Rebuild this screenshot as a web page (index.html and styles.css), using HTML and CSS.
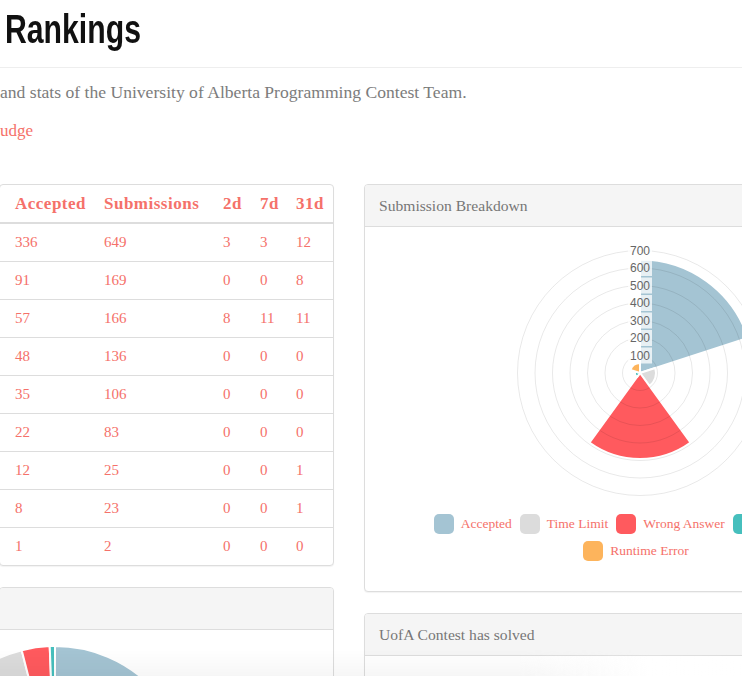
FILE: index.html
```html
<!DOCTYPE html>
<html>
<head>
<meta charset="utf-8">
<title>Rankings</title>
<link rel="stylesheet" href="styles.css">
</head>
<body>
<div class="page-header"><h1>Rankings</h1></div>
<p class="lead">and stats of the University of Alberta Programming Contest Team.</p>
<p class="link"><a href="#">udge</a></p>

<div class="row">
  <div class="col col-left">
    <div class="panel panel-table">
      <table class="ranks">
        <colgroup>
          <col class="c-acc"><col class="c-sub"><col class="c-2d"><col class="c-7d"><col class="c-31d">
        </colgroup>
        <thead>
          <tr><th class="first">Accepted</th><th>Submissions</th><th>2d</th><th>7d</th><th>31d</th></tr>
        </thead>
        <tbody>
          <tr><td class="first">336</td><td>649</td><td>3</td><td>3</td><td>12</td></tr>
          <tr><td class="first">91</td><td>169</td><td>0</td><td>0</td><td>8</td></tr>
          <tr><td class="first">57</td><td>166</td><td>8</td><td>11</td><td>11</td></tr>
          <tr><td class="first">48</td><td>136</td><td>0</td><td>0</td><td>0</td></tr>
          <tr><td class="first">35</td><td>106</td><td>0</td><td>0</td><td>0</td></tr>
          <tr><td class="first">22</td><td>83</td><td>0</td><td>0</td><td>0</td></tr>
          <tr><td class="first">12</td><td>25</td><td>0</td><td>0</td><td>1</td></tr>
          <tr><td class="first">8</td><td>23</td><td>0</td><td>0</td><td>1</td></tr>
          <tr><td class="first">1</td><td>2</td><td>0</td><td>0</td><td>0</td></tr>
        </tbody>
      </table>
    </div>

    <div class="panel">
      <div class="panel-heading">&nbsp;</div>
      <div class="panel-body pie-body">
        <svg class="pie" width="300" height="300" viewBox="-55 -136 300 300">
          <g stroke="#fff" stroke-width="2" stroke-linejoin="round">
            <path fill="#a4c4d3" d="M0 0 L0 -135 A135 135 0 1 1 -126.86 -46.17 Z"/>
            <path fill="#dcdcdc" d="M0 0 L-126.86 -46.17 A135 135 0 0 1 -33.30 -130.83 Z"/>
            <path fill="#ff5a5e" d="M0 0 L-33.30 -130.83 A135 135 0 0 1 -5.30 -134.90 Z"/>
            <path fill="#46bfbd" d="M0 0 L-5.30 -134.90 A135 135 0 0 1 0 -135 Z"/>
          </g>
        </svg>
      </div>
    </div>
  </div>

  <div class="col col-right">
    <div class="panel">
      <div class="panel-heading">Submission Breakdown</div>
      <div class="panel-body chart-body">
        <svg class="polar" width="300" height="250" viewBox="0 0 300 250">
          <g stroke="#fff" stroke-width="2" stroke-linejoin="round">
            <path fill="#a4c4d3" d="M150 125 L150 11.4 A113.6 113.6 0 0 1 258.04 89.9 Z"/>
            <path fill="#dcdcdc" d="M150 125 L165.22 120.06 A16 16 0 0 1 159.40 137.94 Z"/>
            <path fill="#ff5a5e" d="M150 125 L200.55 194.57 A86 86 0 0 1 99.45 194.57 Z"/>
            <path fill="#46bfbd" d="M150 125 L147.06 129.05 A5 5 0 0 1 145.24 123.45 Z"/>
            <path fill="#fdb45c" d="M150 125 L140.49 121.91 A10 10 0 0 1 150 115 Z"/>
          </g>
          <g fill="none" stroke="#000" stroke-opacity="0.09" stroke-width="1">
            <circle cx="150" cy="125" r="17.5"/>
            <circle cx="150" cy="125" r="35"/>
            <circle cx="150" cy="125" r="52.5"/>
            <circle cx="150" cy="125" r="70"/>
            <circle cx="150" cy="125" r="87.5"/>
            <circle cx="150" cy="125" r="105"/>
            <circle cx="150" cy="125" r="122.5"/>
          </g>
          <g class="ticks">
            <rect x="138" y="99.5" width="24" height="16"/>
            <rect x="138" y="82" width="24" height="16"/>
            <rect x="138" y="64.5" width="24" height="16"/>
            <rect x="138" y="47" width="24" height="16"/>
            <rect x="138" y="29.5" width="24" height="16"/>
            <rect x="138" y="12" width="24" height="16"/>
            <rect x="138" y="-5.5" width="24" height="16"/>
          </g>
          <g class="tick-text" text-anchor="middle">
            <text x="150" y="111.8">100</text>
            <text x="150" y="94.3">200</text>
            <text x="150" y="76.8">300</text>
            <text x="150" y="59.3">400</text>
            <text x="150" y="41.8">500</text>
            <text x="150" y="24.3">600</text>
            <text x="150" y="6.8">700</text>
          </g>
        </svg>
        <ul class="legend">
          <li><span class="sw sw-acc"></span>Accepted</li>
          <li><span class="sw sw-tle"></span>Time Limit</li>
          <li><span class="sw sw-wa"></span>Wrong Answer</li>
          <li><span class="sw sw-ce"></span>Compile Error</li>
          <li><span class="sw sw-re"></span>Runtime Error</li>
        </ul>
      </div>
    </div>

    <div class="panel">
      <div class="panel-heading">UofA Contest has solved</div>
      <div class="panel-body solved-body"></div>
    </div>
  </div>
</div>
<div class="fade"></div>
</body>
</html>
```

FILE: styles.css
```css
html, body {
  margin: 0;
  padding: 0;
  overflow: hidden;
  background: #fff;
}

body {
  font-family: "Liberation Serif", "Times New Roman", serif;
  color: #777;
  width: 742px;
  height: 676px;
  position: relative;
}

.page-header {
  padding: 7px 0 16px 5px;
  border-bottom: 1px solid #eee;
}

.page-header h1 {
  display: inline-block;
  margin: 0;
  font-family: "Liberation Sans", Arial, sans-serif;
  font-weight: 700;
  font-size: 40px;
  line-height: 44px;
  color: #111;
  transform: scaleX(0.755);
  transform-origin: left center;
}

.lead {
  margin: 13px 0 16px;
  font-size: 17.6px;
  line-height: 23px;
  color: #7c7c7c;
}

.link {
  margin: 0 0 42px;
  font-size: 17px;
  line-height: 22px;
}

.link a {
  color: #f5716a;
  text-decoration: none;
}

.row {
  display: flex;
  align-items: flex-start;
  gap: 30px;
}

.col-left {
  width: 335px;
  margin-left: -1px;
  flex: none;
}

.col-right {
  width: 540px;
  flex: none;
}

.panel {
  border: 1px solid #ddd;
  border-radius: 4px;
  background: #fff;
  box-shadow: 0 1px 1px rgba(0, 0, 0, 0.05);
  margin-bottom: 21px;
}

.panel-heading {
  padding: 11px 14px 10px;
  font-size: 15.6px;
  line-height: 20px;
  color: #777;
  background: #f5f5f5;
  border-bottom: 1px solid #ddd;
  border-radius: 3px 3px 0 0;
}

/* table */
.ranks {
  width: 100%;
  border-collapse: collapse;
  table-layout: fixed;
  color: #f5716a;
}

.c-acc { width: 96px; }
.c-sub { width: 119px; }
.c-2d { width: 37px; }
.c-7d { width: 36px; }
.c-31d { width: 45px; }

.ranks th,
.ranks td {
  padding: 8px;
  text-align: left;
  white-space: nowrap;
  overflow: hidden;
}

.ranks th {
  font-weight: 700;
  font-size: 17px;
  letter-spacing: 0.5px;
  line-height: 21px;
  border-bottom: 2px solid #ddd;
}

.ranks td {
  font-size: 15px;
  line-height: 21px;
  border-top: 1px solid #ddd;
}

.ranks tbody tr:first-child td {
  border-top: 0;
}

.ranks .first {
  padding-left: 15px;
}

/* polar chart */
.chart-body {
  padding: 21px 0 30px;
}

.polar {
  display: block;
  margin-left: 125px;
  overflow: visible;
}

.ticks rect {
  fill: #fff;
  fill-opacity: 0.75;
}

.tick-text text {
  font-family: "Liberation Sans", Arial, sans-serif;
  font-size: 12px;
  fill: #666;
}

.legend {
  list-style: none;
  margin: 16px 0 0 61px;
  padding: 0;
  width: 420px;
  display: flex;
  flex-wrap: wrap;
  justify-content: center;
  column-gap: 8px;
  row-gap: 7px;
}

.legend li {
  display: flex;
  align-items: center;
  gap: 7px;
  font-size: 13.5px;
  line-height: 20px;
  color: #f5716a;
  white-space: nowrap;
}

.sw {
  width: 20px;
  height: 20px;
  border-radius: 5px;
  flex: none;
}

.sw-acc { background: #a4c4d3; }
.sw-tle { background: #dcdcdc; }
.sw-wa { background: #ff5a5e; }
.sw-ce { background: #46bfbd; }
.sw-re { background: #fdb45c; }

/* pie */
.pie-body {
  padding-top: 15px;
  height: 200px;
}

.pie {
  display: block;
}

.solved-body {
  height: 200px;
}

.fade {
  position: absolute;
  left: 0;
  right: 0;
  bottom: 0;
  height: 26px;
  background: linear-gradient(to right, rgba(0, 0, 0, 0.035) 0%, rgba(0, 0, 0, 0.035) 70%, rgba(255, 255, 255, 0.6) 88%, rgba(255, 255, 255, 0) 100%);
  -webkit-mask-image: linear-gradient(to bottom, transparent, #000);
  mask-image: linear-gradient(to bottom, transparent, #000);
  pointer-events: none;
}
```
